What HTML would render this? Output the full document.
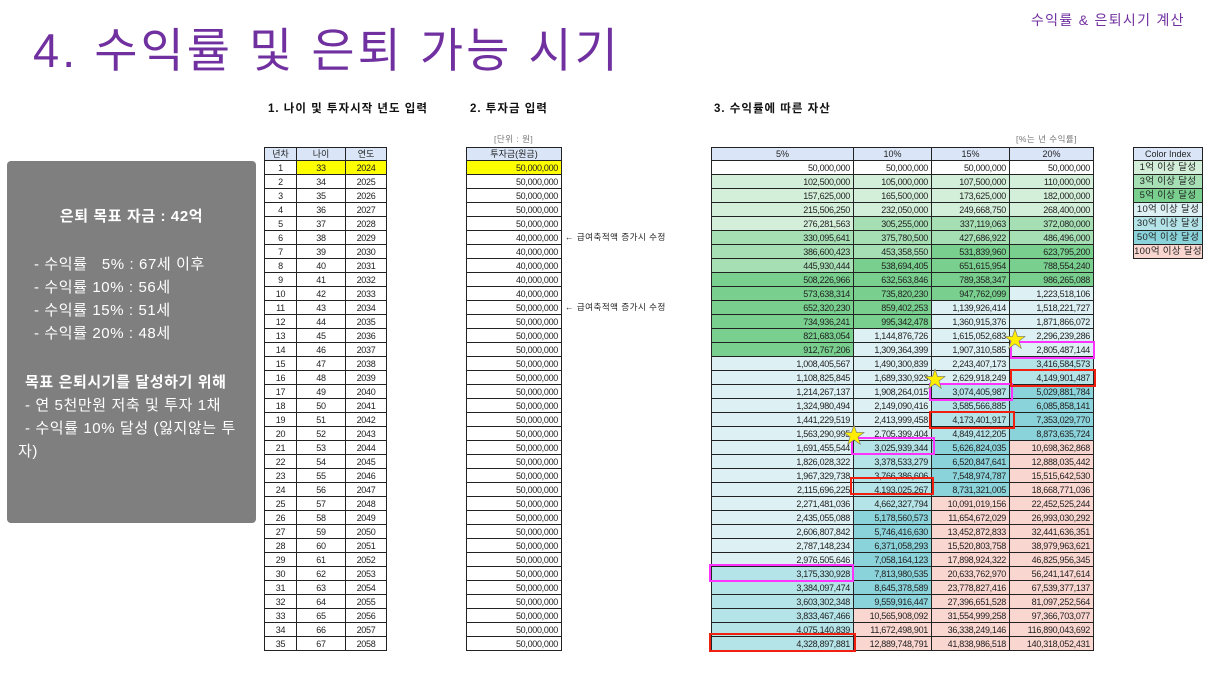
<!DOCTYPE html>
<html><head><meta charset="utf-8"><style>
body{margin:0;width:1216px;height:684px;background:#fff;position:relative;overflow:hidden;font-family:"Liberation Sans","Noto Sans CJK KR",sans-serif}
.abs{position:absolute;white-space:nowrap}
h1{position:absolute;left:33px;top:12px;margin:0;font-weight:normal;font-size:47px;color:#7030a0;font-family:"Liberation Sans","Noto Sans CJK KR",sans-serif;letter-spacing:3px}
.sec{font-size:11.5px;font-weight:bold;color:#111;letter-spacing:1px}
table{position:absolute;border-collapse:collapse;table-layout:fixed;font-size:9px;color:#222}
td{border:1px solid #222;height:13px;padding:0 3px;line-height:12px;overflow:hidden;white-space:nowrap;text-align:right;letter-spacing:-0.3px}
th{border:1px solid #222;height:12px;padding:0;font-weight:normal;background:#dae6f8;font-size:9px;line-height:12px}
.c td{text-align:center}
.ci td{font-size:9.5px;letter-spacing:0.3px;padding:0}
.y{background:#ffff00}
.a{background:#d4efd9}.b{background:#a6dfb4}.c1{background:#78cf8e}.d{background:#ddf0f3}.e{background:#b4e3e8}.f{background:#8bd3da}.g{background:#fad6d0}
.box{position:absolute;left:7px;top:161px;width:249px;height:362px;background:#7f7f7f;border-radius:4px;color:#fff;font-size:15px;letter-spacing:0.6px}
.box div{position:absolute;white-space:nowrap}
.mag{position:absolute;border:2px solid #ff33ff;box-sizing:border-box}
.red{position:absolute;border:2px solid #f02010;box-sizing:border-box}
.star{position:absolute;color:#ffee00;font-size:22px;line-height:22px;-webkit-text-stroke:0.6px #777}
</style></head><body>
<div class="abs" style="left:1031px;top:10px;font-size:14px;color:#7030a0;letter-spacing:1.3px">수익률 &amp; 은퇴시기 계산</div>
<h1>4. 수익률 및 은퇴 가능 시기</h1>
<div class="abs sec" style="left:268px;top:100px">1. 나이 및 투자시작 년도 입력</div>
<div class="abs sec" style="left:470px;top:100px">2. 투자금 입력</div>
<div class="abs sec" style="left:714px;top:100px">3. 수익률에 따른 자산</div>
<div class="abs" style="left:494px;top:133px;font-size:8.5px;color:#777;letter-spacing:0.5px">[단위 : 원]</div>
<div class="abs" style="left:1016px;top:133px;font-size:8.5px;color:#777;letter-spacing:0.5px">[%는 년 수익률]</div>
<div class="abs" style="left:565px;top:231px;font-size:8.5px;color:#222;letter-spacing:0.5px">← 급여축적액 증가시 수정</div>
<div class="abs" style="left:565px;top:301px;font-size:8.5px;color:#222;letter-spacing:0.5px">← 급여축적액 증가시 수정</div>

<div class="box">
<div style="left:0;width:249px;text-align:center;top:44px;font-weight:bold">은퇴 목표 자금 : 42억</div>
<div style="left:27px;top:92px">- 수익률 &nbsp;&nbsp;5% : 67세 이후</div>
<div style="left:27px;top:115px">- 수익률 10% : 56세</div>
<div style="left:27px;top:138px">- 수익률 15% : 51세</div>
<div style="left:27px;top:161px">- 수익률 20% : 48세</div>
<div style="left:18px;top:210px;font-weight:bold">목표 은퇴시기를 달성하기 위해</div>
<div style="left:18px;top:233px">- 연 5천만원 저축 및 투자 1채</div>
<div style="left:18px;top:256px">- 수익률 10% 달성 (잃지않는 투</div>
<div style="left:11px;top:279px">자)</div>
</div>

<table class="c" style="left:264px;top:147px;width:122px">
<colgroup><col style="width:32px"><col style="width:49px"><col style="width:41px"></colgroup>
<tr><th>년차</th><th>나이</th><th>연도</th></tr>
<tr><td>1</td><td class="y">33</td><td class="y">2024</td></tr>
<tr><td>2</td><td>34</td><td>2025</td></tr><tr><td>3</td><td>35</td><td>2026</td></tr><tr><td>4</td><td>36</td><td>2027</td></tr><tr><td>5</td><td>37</td><td>2028</td></tr><tr><td>6</td><td>38</td><td>2029</td></tr><tr><td>7</td><td>39</td><td>2030</td></tr><tr><td>8</td><td>40</td><td>2031</td></tr><tr><td>9</td><td>41</td><td>2032</td></tr><tr><td>10</td><td>42</td><td>2033</td></tr><tr><td>11</td><td>43</td><td>2034</td></tr><tr><td>12</td><td>44</td><td>2035</td></tr><tr><td>13</td><td>45</td><td>2036</td></tr><tr><td>14</td><td>46</td><td>2037</td></tr><tr><td>15</td><td>47</td><td>2038</td></tr><tr><td>16</td><td>48</td><td>2039</td></tr><tr><td>17</td><td>49</td><td>2040</td></tr><tr><td>18</td><td>50</td><td>2041</td></tr><tr><td>19</td><td>51</td><td>2042</td></tr><tr><td>20</td><td>52</td><td>2043</td></tr><tr><td>21</td><td>53</td><td>2044</td></tr><tr><td>22</td><td>54</td><td>2045</td></tr><tr><td>23</td><td>55</td><td>2046</td></tr><tr><td>24</td><td>56</td><td>2047</td></tr><tr><td>25</td><td>57</td><td>2048</td></tr><tr><td>26</td><td>58</td><td>2049</td></tr><tr><td>27</td><td>59</td><td>2050</td></tr><tr><td>28</td><td>60</td><td>2051</td></tr><tr><td>29</td><td>61</td><td>2052</td></tr><tr><td>30</td><td>62</td><td>2053</td></tr><tr><td>31</td><td>63</td><td>2054</td></tr><tr><td>32</td><td>64</td><td>2055</td></tr><tr><td>33</td><td>65</td><td>2056</td></tr><tr><td>34</td><td>66</td><td>2057</td></tr><tr><td>35</td><td>67</td><td>2058</td></tr>
</table>

<table style="left:466px;top:147px;width:96px">
<tr><th>투자금(원금)</th></tr>
<tr><td class="y">50,000,000</td></tr>
<tr><td>50,000,000</td></tr><tr><td>50,000,000</td></tr><tr><td>50,000,000</td></tr><tr><td>50,000,000</td></tr>
<tr><td>40,000,000</td></tr><tr><td>40,000,000</td></tr><tr><td>40,000,000</td></tr><tr><td>40,000,000</td></tr><tr><td>40,000,000</td></tr>
<tr><td>50,000,000</td></tr><tr><td>50,000,000</td></tr><tr><td>50,000,000</td></tr><tr><td>50,000,000</td></tr><tr><td>50,000,000</td></tr><tr><td>50,000,000</td></tr><tr><td>50,000,000</td></tr><tr><td>50,000,000</td></tr><tr><td>50,000,000</td></tr><tr><td>50,000,000</td></tr><tr><td>50,000,000</td></tr><tr><td>50,000,000</td></tr><tr><td>50,000,000</td></tr><tr><td>50,000,000</td></tr><tr><td>50,000,000</td></tr><tr><td>50,000,000</td></tr><tr><td>50,000,000</td></tr><tr><td>50,000,000</td></tr><tr><td>50,000,000</td></tr><tr><td>50,000,000</td></tr><tr><td>50,000,000</td></tr><tr><td>50,000,000</td></tr><tr><td>50,000,000</td></tr><tr><td>50,000,000</td></tr><tr><td>50,000,000</td></tr>
</table>

<table style="left:711px;top:147px;width:382px">
<colgroup><col style="width:142px"><col style="width:78px"><col style="width:78px"><col style="width:84px"></colgroup>
<tr><th>5%</th><th>10%</th><th>15%</th><th>20%</th></tr>
<tr><td>50,000,000</td><td>50,000,000</td><td>50,000,000</td><td>50,000,000</td></tr>
<tr><td class="a">102,500,000</td><td class="a">105,000,000</td><td class="a">107,500,000</td><td class="a">110,000,000</td></tr>
<tr><td class="a">157,625,000</td><td class="a">165,500,000</td><td class="a">173,625,000</td><td class="a">182,000,000</td></tr>
<tr><td class="a">215,506,250</td><td class="a">232,050,000</td><td class="a">249,668,750</td><td class="a">268,400,000</td></tr>
<tr><td class="a">276,281,563</td><td class="b">305,255,000</td><td class="b">337,119,063</td><td class="b">372,080,000</td></tr>
<tr><td class="b">330,095,641</td><td class="b">375,780,500</td><td class="b">427,686,922</td><td class="b">486,496,000</td></tr>
<tr><td class="b">386,600,423</td><td class="b">453,358,550</td><td class="c1">531,839,960</td><td class="c1">623,795,200</td></tr>
<tr><td class="b">445,930,444</td><td class="c1">538,694,405</td><td class="c1">651,615,954</td><td class="c1">788,554,240</td></tr>
<tr><td class="c1">508,226,966</td><td class="c1">632,563,846</td><td class="c1">789,358,347</td><td class="c1">986,265,088</td></tr>
<tr><td class="c1">573,638,314</td><td class="c1">735,820,230</td><td class="c1">947,762,099</td><td class="d">1,223,518,106</td></tr>
<tr><td class="c1">652,320,230</td><td class="c1">859,402,253</td><td class="d">1,139,926,414</td><td class="d">1,518,221,727</td></tr>
<tr><td class="c1">734,936,241</td><td class="c1">995,342,478</td><td class="d">1,360,915,376</td><td class="d">1,871,866,072</td></tr>
<tr><td class="c1">821,683,054</td><td class="d">1,144,876,726</td><td class="d">1,615,052,683</td><td class="d">2,296,239,286</td></tr>
<tr><td class="c1">912,767,206</td><td class="d">1,309,364,399</td><td class="d">1,907,310,585</td><td class="d">2,805,487,144</td></tr>
<tr><td class="d">1,008,405,567</td><td class="d">1,490,300,839</td><td class="d">2,243,407,173</td><td class="e">3,416,584,573</td></tr>
<tr><td class="d">1,108,825,845</td><td class="d">1,689,330,923</td><td class="d">2,629,918,249</td><td class="e">4,149,901,487</td></tr>
<tr><td class="d">1,214,267,137</td><td class="d">1,908,264,015</td><td class="e">3,074,405,987</td><td class="f">5,029,881,784</td></tr>
<tr><td class="d">1,324,980,494</td><td class="d">2,149,090,416</td><td class="e">3,585,566,885</td><td class="f">6,085,858,141</td></tr>
<tr><td class="d">1,441,229,519</td><td class="d">2,413,999,458</td><td class="e">4,173,401,917</td><td class="f">7,353,029,770</td></tr>
<tr><td class="d">1,563,290,995</td><td class="d">2,705,399,404</td><td class="e">4,849,412,205</td><td class="f">8,873,635,724</td></tr>
<tr><td class="d">1,691,455,544</td><td class="e">3,025,939,344</td><td class="f">5,626,824,035</td><td class="g">10,698,362,868</td></tr>
<tr><td class="d">1,826,028,322</td><td class="e">3,378,533,279</td><td class="f">6,520,847,641</td><td class="g">12,888,035,442</td></tr>
<tr><td class="d">1,967,329,738</td><td class="e">3,766,386,606</td><td class="f">7,548,974,787</td><td class="g">15,515,642,530</td></tr>
<tr><td class="d">2,115,696,225</td><td class="e">4,193,025,267</td><td class="f">8,731,321,005</td><td class="g">18,668,771,036</td></tr>
<tr><td class="d">2,271,481,036</td><td class="e">4,662,327,794</td><td class="g">10,091,019,156</td><td class="g">22,452,525,244</td></tr>
<tr><td class="d">2,435,055,088</td><td class="f">5,178,560,573</td><td class="g">11,654,672,029</td><td class="g">26,993,030,292</td></tr>
<tr><td class="d">2,606,807,842</td><td class="f">5,746,416,630</td><td class="g">13,452,872,833</td><td class="g">32,441,636,351</td></tr>
<tr><td class="d">2,787,148,234</td><td class="f">6,371,058,293</td><td class="g">15,520,803,758</td><td class="g">38,979,963,621</td></tr>
<tr><td class="d">2,976,505,646</td><td class="f">7,058,164,123</td><td class="g">17,898,924,322</td><td class="g">46,825,956,345</td></tr>
<tr><td class="e">3,175,330,928</td><td class="f">7,813,980,535</td><td class="g">20,633,762,970</td><td class="g">56,241,147,614</td></tr>
<tr><td class="e">3,384,097,474</td><td class="f">8,645,378,589</td><td class="g">23,778,827,416</td><td class="g">67,539,377,137</td></tr>
<tr><td class="e">3,603,302,348</td><td class="f">9,559,916,447</td><td class="g">27,396,651,528</td><td class="g">81,097,252,564</td></tr>
<tr><td class="e">3,833,467,466</td><td class="g">10,565,908,092</td><td class="g">31,554,999,258</td><td class="g">97,366,703,077</td></tr>
<tr><td class="e">4,075,140,839</td><td class="g">11,672,498,901</td><td class="g">36,338,249,146</td><td class="g">116,890,043,692</td></tr>
<tr><td class="e">4,328,897,881</td><td class="g">12,889,748,791</td><td class="g">41,838,986,518</td><td class="g">140,318,052,431</td></tr>
</table>

<table class="c ci" style="left:1133px;top:147px;width:70px">
<tr><th>Color Index</th></tr>
<tr><td class="a">1억 이상 달성</td></tr>
<tr><td class="b">3억 이상 달성</td></tr>
<tr><td class="c1">5억 이상 달성</td></tr>
<tr><td class="d">10억 이상 달성</td></tr>
<tr><td class="e">30억 이상 달성</td></tr>
<tr><td class="f">50억 이상 달성</td></tr>
<tr><td class="g">100억 이상 달성</td></tr>
</table>

<div class="mag" style="left:1010px;top:341px;width:85px;height:18px"></div>
<div class="mag" style="left:929px;top:383px;width:84px;height:18px"></div>
<div class="mag" style="left:851px;top:437px;width:84px;height:18px"></div>
<div class="mag" style="left:709px;top:564px;width:145px;height:18px"></div>
<div class="red" style="left:1010px;top:369px;width:86px;height:18px"></div>
<div class="red" style="left:929px;top:411px;width:86px;height:18px"></div>
<div class="red" style="left:850px;top:477px;width:84px;height:18px"></div>
<div class="red" style="left:709px;top:633px;width:147px;height:19px"></div>
<div class="star" style="left:1004px;top:329px">★</div>
<div class="star" style="left:924px;top:369px">★</div>
<div class="star" style="left:843px;top:425px">★</div>
</body></html>
